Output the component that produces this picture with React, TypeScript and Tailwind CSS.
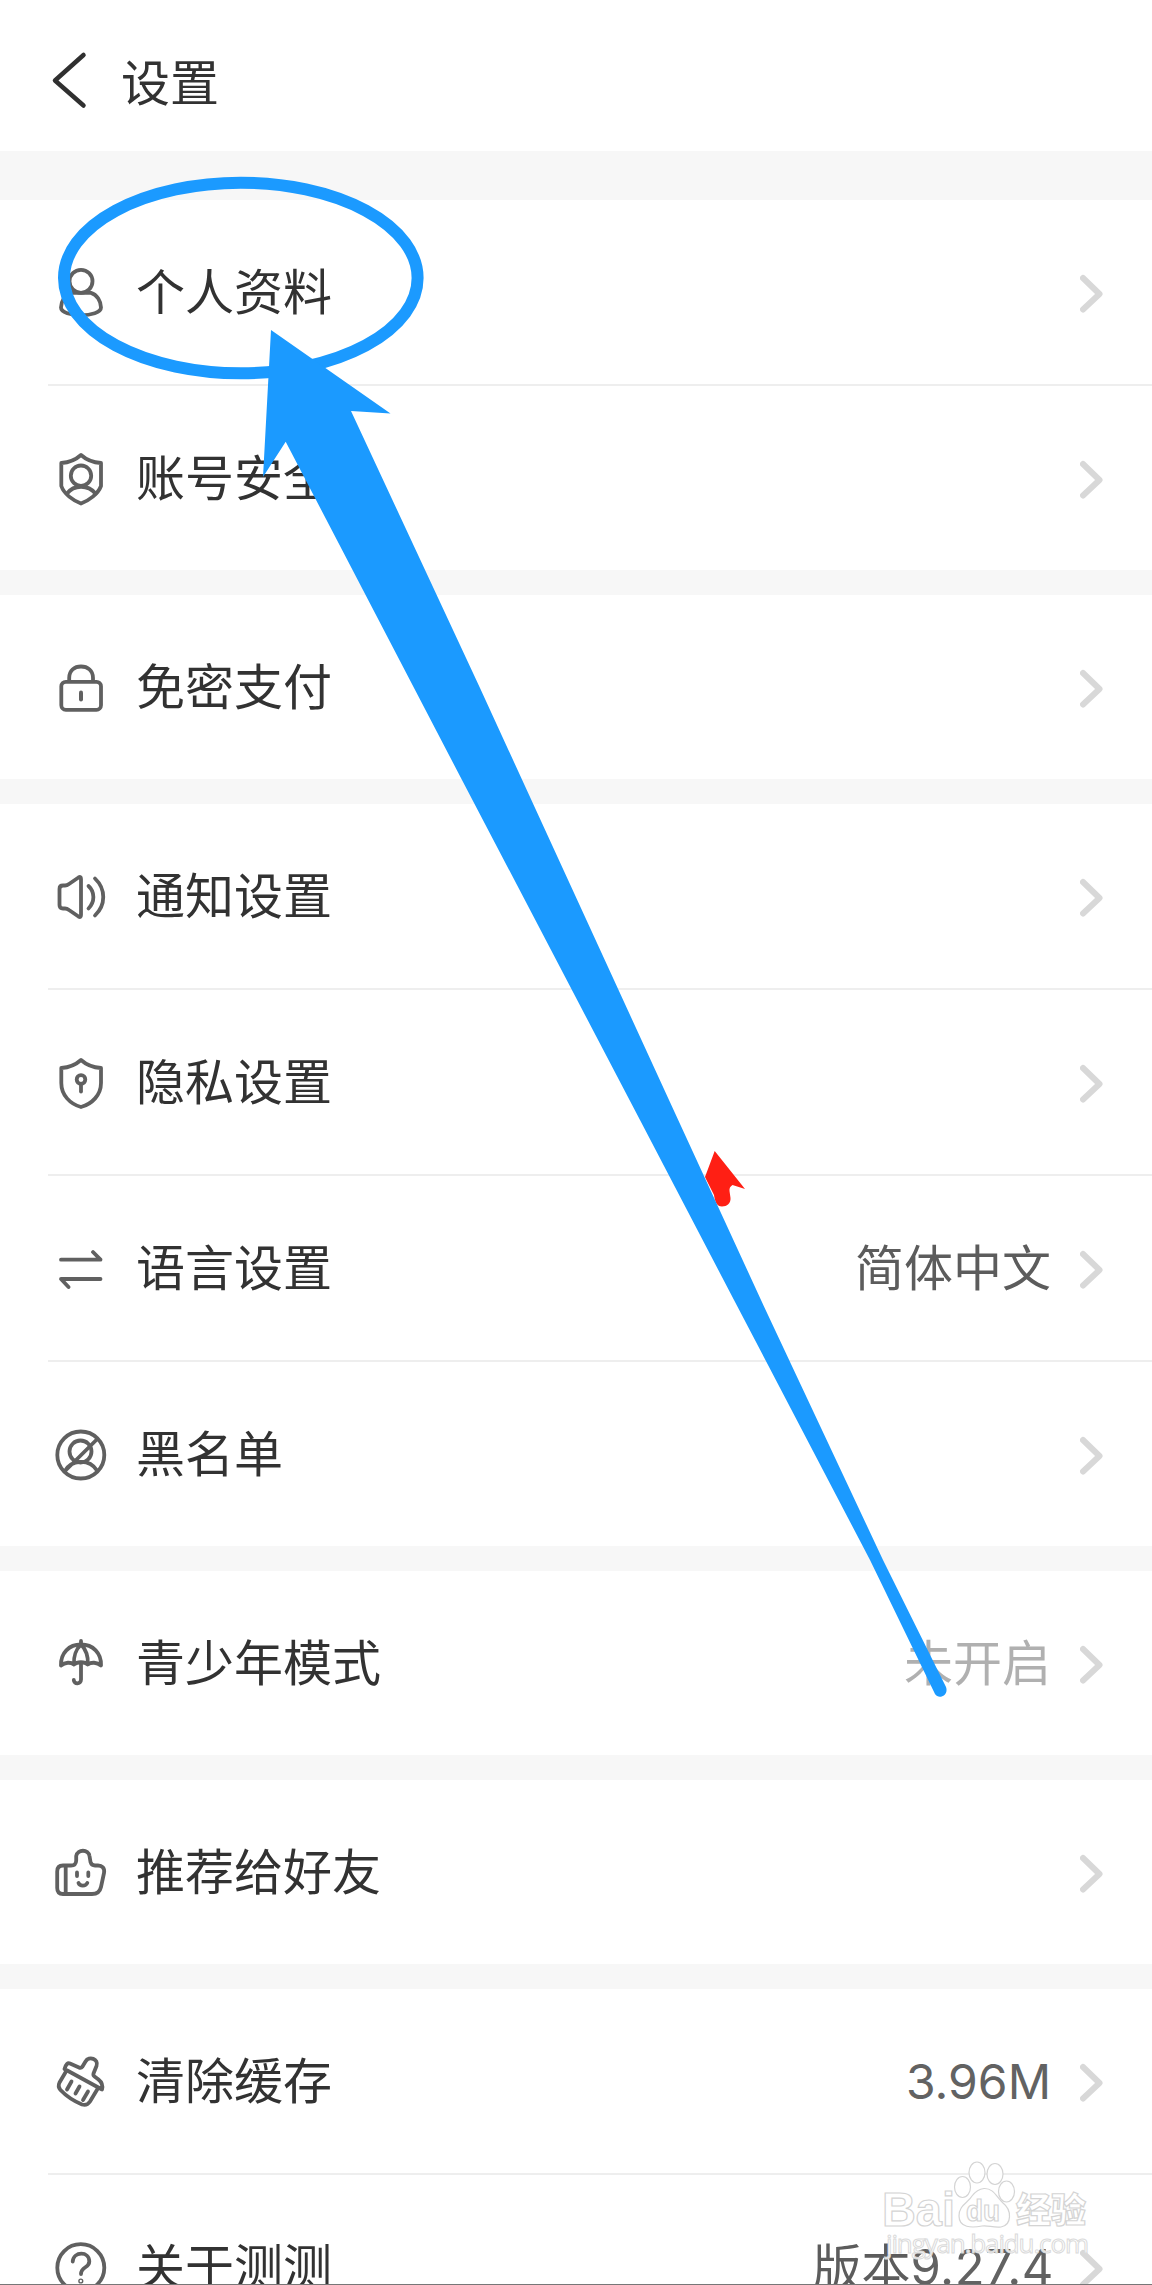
import type { ReactNode } from 'react';

type Item = {
  label: string;
  icon: ReactNode;
  value?: ReactNode;
  tone?: string;
};

const icons = {
  user: (
    <>
      <circle cx="30" cy="19.3" r="11.5" />
      <path d="M20 30.8H40C46 32.5 50 39.5 50 45.5C50 50.5 40 53.3 30 53.3C20 53.3 10 50.5 10 45.5C10 39.5 14 32.5 20 30.8Z" />
    </>
  ),
  account: (
    <>
      <path d="M30 7C25 11.5 18 14.5 10.3 15V38C13 46 22 52.5 30 55.5C38 52.5 47 46 50 38V15C42 14.5 35 11.5 30 7Z" />
      <circle cx="30" cy="27.7" r="10.2" />
      <path d="M16 45.5C23 36.5 37 36.5 44.5 45.5" />
    </>
  ),
  lock: (
    <>
      <rect x="10.3" y="24.8" width="39.7" height="28" rx="4.5" />
      <path d="M18.2 24V21C18.2 13.5 23.5 9.5 30 9.5S42 13.5 42 21V24" />
      <path d="M30 35.5V42.5" strokeWidth="4" />
    </>
  ),
  sound: (
    <>
      <path d="M8.5 23Q8.5 19.5 12 19.5H14Q16 19.5 18 18L27.5 11.5Q30 10 30 13V49Q30 52 27.5 50.5L18 44Q16 42.5 14 42.5H12Q8.5 42.5 8.5 39Z" />
      <path d="M37.5 20C44 26 44 36 37.5 42.5M44 12.5C55 23 55 39 44 49.5" />
    </>
  ),
  privacy: (
    <>
      <path d="M30 8C25 12.5 18 15.5 10.3 16V31C10.3 43 19 52 30 55C41 52 50 43 50 31V16C42 15.5 35 12.5 30 8Z" />
      <circle cx="30" cy="27.5" r="4.3" />
      <path d="M30 32V39.5" />
    </>
  ),
  language: (
    <path d="M10 21.7H49.5L42 14M49.5 41H10L17.5 49" strokeWidth="3.8" />
  ),
  blocked: (
    <>
      <circle cx="29.8" cy="31" r="23.5" />
      <circle cx="29.5" cy="27.5" r="11" />
      <path d="M46.3 15L14 47C20 36 38 34 46 46.5" />
    </>
  ),
  umbrella: (
    <>
      <path d="M30 8V11.5M10 32.5C9.5 20 18 11.5 30 11.5S50.5 20 50 32.5C46 29 40 29 36.7 31.5C34 28.5 26 28.5 23 31.5C20 29 14 29 10 32.5Z" />
      <path d="M23 31C22.5 24 25 16 30 11.5C35 16 37.5 24 36.7 31M30 30V46.5C30 51.5 22.8 51.5 22.8 47" />
    </>
  ),
  thumb: (
    <>
      <path d="M14.7 23.5H12C8 23.5 6.2 26 6.2 29.5V46C6.2 50 8.5 52 12 52H41C46 52 49 49.5 50 45L53 31C54 26 51 23.5 47 23.5H44Q40.5 23.5 39.5 20L38.5 14C37.5 7 26.5 7 25.2 14V18.5Q25 23.5 20 23.5ZM14.7 23.5V52" />
      <path d="M26 30.5V34M37.3 30.5V34M27.5 41C29 44.5 34.5 44.5 36.3 41" />
    </>
  ),
  brush: (
    <>
      <path d="M19 12.5L28 16.5Q30 17.5 31.5 15.5L34.5 10.5C38 4.5 48 8 45.5 15L42.5 22.5Q42 24.5 43.5 25.5L47.5 28.5Q52.5 32.5 51 38.5L13.5 18Q15.5 11 19 12.5Z" />
      <path d="M15 20.5L8.5 31.5Q6.5 35.5 9.5 39Q18 48 31 53.5Q36 55 39 50.5L46.5 38" />
      <path d="M20.5 30.5L16 38.5M28.5 35.5L24.5 42.5M37 40.5L32 49" />
    </>
  ),
  help: (
    <>
      <circle cx="29.8" cy="30.7" r="23.5" />
      <path d="M21.7 24.5C22.5 14 38.3 14 38.3 24.5C38.3 31 30 29.5 30 37" />
      <circle cx="29.8" cy="44" r="0.7" />
    </>
  ),
};

const groups: Item[][] = [
  [
    { label: '个人资料', icon: icons.user },
    { label: '账号安全', icon: icons.account },
  ],
  [{ label: '免密支付', icon: icons.lock }],
  [
    { label: '通知设置', icon: icons.sound },
    { label: '隐私设置', icon: icons.privacy },
    { label: '语言设置', icon: icons.language, value: '简体中文' },
    { label: '黑名单', icon: icons.blocked },
  ],
  [{ label: '青少年模式', icon: icons.umbrella, value: '未开启', tone: 'text-[#b0b0b0]' }],
  [{ label: '推荐给好友', icon: icons.thumb }],
  [
    {
      label: '清除缓存',
      icon: icons.brush,
      value: <span className="text-[48px] text-[#626262]">3.96M</span>,
    },
    {
      label: '关于测测',
      icon: icons.help,
      value: (
        <>
          版本<span className="-mr-[3px] tracking-[0.5px] text-[#626262]">9.27.4</span>
        </>
      ),
    },
  ],
];

function Row({ item }: { item: Item }) {
  return (
    <div className="ml-12 box-content flex h-[184px] items-center border-b-2 border-[#eeeeee] pr-[46px] last:border-b-0">
      <svg
        viewBox="0 0 60 60"
        className="ml-[3px] h-[60px] w-[60px] shrink-0 text-[#606060]"
        fill="none"
        stroke="currentColor"
        strokeWidth="3.8"
        strokeLinecap="round"
        strokeLinejoin="round"
      >
        {item.icon}
      </svg>
      <span className="ml-[25px] text-[49px] leading-none text-[#323232]">{item.label}</span>
      <span className={`ml-auto text-[49px] leading-none whitespace-nowrap ${item.tone ?? 'text-[#5c5c5c]'}`}>
        {item.value}
      </span>
      <svg
        viewBox="0 0 26 44"
        className="ml-[29px] h-11 w-[26px] shrink-0 text-[#d8d8d8]"
        fill="none"
        stroke="currentColor"
        strokeWidth="6"
        strokeLinecap="round"
        strokeLinejoin="round"
      >
        <path d="M3 8L19.5 24L3 39.5" />
      </svg>
    </div>
  );
}

function Watermark() {
  return (
    <g fill="#ffffff" fillOpacity="0.85" stroke="#d4d4d4" strokeWidth="1.2">
      <text x="882" y="2226" fontSize="48" fontWeight="700" fontFamily="Liberation Sans, sans-serif" textLength="73" lengthAdjust="spacingAndGlyphs">Bai</text>
      <ellipse cx="962.5" cy="2187" rx="8" ry="10.5" />
      <ellipse cx="977" cy="2172.5" rx="8" ry="10.5" />
      <ellipse cx="995" cy="2174" rx="8" ry="10.5" />
      <ellipse cx="1006.5" cy="2191.5" rx="8" ry="10.5" />
      <path d="M984 2188.5C993 2188 996 2196 1003 2203C1012 2210 1012 2225 1001 2227C993 2228 988 2225 982 2226C972 2228 959 2228 959 2216C959 2205 968 2203 972 2196C975 2192 979 2189 984 2188.5Z" />
      <text x="966" y="2221" fontSize="29" fontFamily="Liberation Sans, sans-serif" fontWeight="700" textLength="34" lengthAdjust="spacingAndGlyphs">du</text>
      <text x="1016" y="2223" fontSize="35" fontWeight="900" fontFamily="Noto Sans CJK SC, sans-serif">经验</text>
      <text x="886" y="2253" fontSize="26" fontFamily="Open Sans, sans-serif" fillOpacity="0.9" stroke="#dadada" strokeWidth="1" textLength="203">jingyan.baidu.com</text>
    </g>
  );
}

export default function App() {
  return (
    <div className="relative h-[2285px] w-[1152px] overflow-hidden bg-[#f7f7f7] font-['Inter','Noto_Sans_CJK_SC',sans-serif]">
      <header className="flex h-[151px] items-center bg-white pt-4">
        <svg
          viewBox="0 0 40 60"
          className="mb-2 ml-[50px] h-[60px] w-10 text-[#303030]"
          fill="none"
          stroke="currentColor"
          strokeWidth="4.5"
          strokeLinecap="round"
          strokeLinejoin="round"
        >
          <path d="M33.5 5L5 30.5L33.5 55.5" />
        </svg>
        <h1 className="ml-[31px] text-[49px] leading-none text-[#323232]">设置</h1>
      </header>
      <main className="mt-[49px] flex flex-col gap-[25px]">
        {groups.map((group) => (
          <section key={group[0].label} className="bg-white">
            {group.map((item) => (
              <Row key={item.label} item={item} />
            ))}
          </section>
        ))}
      </main>
      <svg viewBox="0 0 1152 2285" className="pointer-events-none absolute inset-0 h-[2285px] w-[1152px]">
        <path
          d="M714.7 1151L745 1189L732.5 1185Q729 1187 729.5 1191L730.5 1198C731 1203 727 1206.5 722 1206.5C717 1206.5 715 1202 714 1195L712 1191L705 1177Z"
          fill="#ff1f14"
        />
        <ellipse cx="240.8" cy="278" rx="176.8" ry="95.3" fill="none" stroke="#1b9aff" strokeWidth="12" />
        <path
          d="M271 330L390.5 413.5L351 411L480 688L669 1100L761 1300L883 1560L946 1687C949 1695 939 1700 935 1694L870 1560L734 1300L640 1120L462 780L285.7 441.7L263 477Z"
          fill="#1b9aff"
        />
        <Watermark />
      </svg>
      <div className="absolute inset-x-0 bottom-0 h-px bg-[#777777]" />
    </div>
  );
}
